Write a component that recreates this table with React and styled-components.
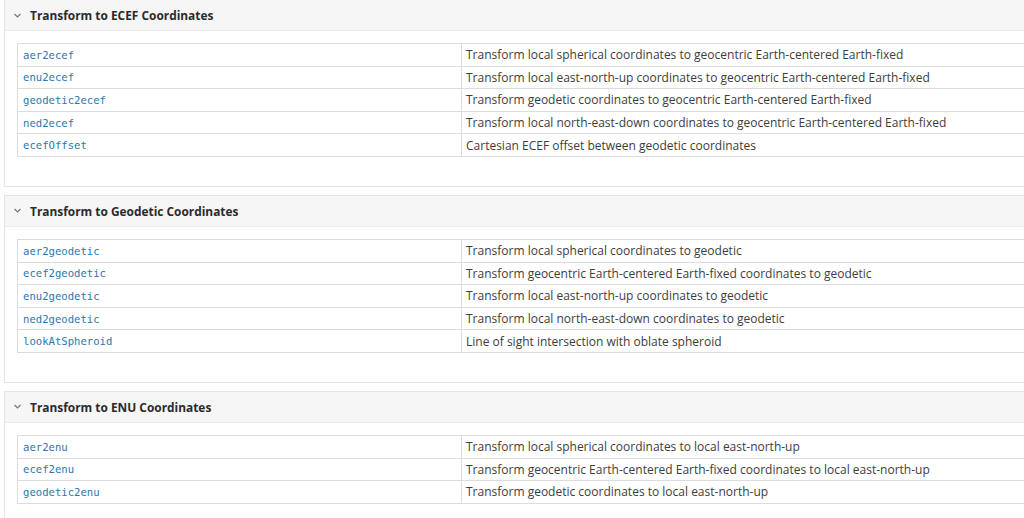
import React from 'react';
import styled, { createGlobalStyle } from 'styled-components';

const GlobalStyle = createGlobalStyle`
  html, body {
    margin: 0;
    padding: 0;
    background: #ffffff;
    overflow: hidden;
  }
  body {
    font-family: "Open Sans", "Liberation Sans", sans-serif;
    color: #333333;
  }
`;

const Page = styled.div`
  width: 1060px;
  margin-top: -1px;
  padding-left: 4px;
  display: flex;
  flex-direction: column;
  gap: 8px;
`;

const Panel = styled.section`
  border: 1px solid #e4e4e4;
  background: #ffffff;
`;

const Header = styled.div`
  height: 30px;
  display: flex;
  align-items: center;
  gap: 8px;
  padding-left: 8px;
  background: #f6f6f6;
  border-bottom: 1px solid #ececec;
`;

const Title = styled.h3`
  margin: 0;
  font-size: 11.9px;
  font-weight: 700;
  color: #2b2b2b;
`;

const Body = styled.div`
  padding: 12px 0 29px 12px;
`;

const Table = styled.table`
  width: 100%;
  border-collapse: collapse;
  font-size: 12px;
`;

const Row = styled.tr`
  height: 22.6px;
`;

const NameCell = styled.td`
  width: 433px;
  padding: 0 5px;
  border: 1px solid #dcdcdc;
  font-family: "DejaVu Sans Mono", "Liberation Mono", monospace;
  font-size: 10.6px;
  color: #2a78ad;
`;

const DescCell = styled.td`
  padding: 0 4px;
  border: 1px solid #dcdcdc;
  color: #3d3d3d;
  white-space: nowrap;
`;

const Chevron = () => (
  <svg width="9" height="9" viewBox="0 0 9 9">
    <polyline points="1.5,3 4.5,6 7.5,3" fill="none" stroke="#777" strokeWidth="1.2" />
  </svg>
);

const sections = [
  {
    title: 'Transform to ECEF Coordinates',
    rows: [
      ['aer2ecef', 'Transform local spherical coordinates to geocentric Earth-centered Earth-fixed'],
      ['enu2ecef', 'Transform local east-north-up coordinates to geocentric Earth-centered Earth-fixed'],
      ['geodetic2ecef', 'Transform geodetic coordinates to geocentric Earth-centered Earth-fixed'],
      ['ned2ecef', 'Transform local north-east-down coordinates to geocentric Earth-centered Earth-fixed'],
      ['ecefOffset', 'Cartesian ECEF offset between geodetic coordinates'],
    ],
  },
  {
    title: 'Transform to Geodetic Coordinates',
    rows: [
      ['aer2geodetic', 'Transform local spherical coordinates to geodetic'],
      ['ecef2geodetic', 'Transform geocentric Earth-centered Earth-fixed coordinates to geodetic'],
      ['enu2geodetic', 'Transform local east-north-up coordinates to geodetic'],
      ['ned2geodetic', 'Transform local north-east-down coordinates to geodetic'],
      ['lookAtSpheroid', 'Line of sight intersection with oblate spheroid'],
    ],
  },
  {
    title: 'Transform to ENU Coordinates',
    rows: [
      ['aer2enu', 'Transform local spherical coordinates to local east-north-up'],
      ['ecef2enu', 'Transform geocentric Earth-centered Earth-fixed coordinates to local east-north-up'],
      ['geodetic2enu', 'Transform geodetic coordinates to local east-north-up'],
    ],
  },
];

export default function App() {
  return (
    <>
      <GlobalStyle />
      <Page>
        {sections.map((s) => (
          <Panel key={s.title}>
            <Header>
              <Chevron />
              <Title>{s.title}</Title>
            </Header>
            <Body>
              <Table>
                <tbody>
                  {s.rows.map(([name, desc]) => (
                    <Row key={name}>
                      <NameCell>{name}</NameCell>
                      <DescCell>{desc}</DescCell>
                    </Row>
                  ))}
                </tbody>
              </Table>
            </Body>
          </Panel>
        ))}
      </Page>
    </>
  );
}
